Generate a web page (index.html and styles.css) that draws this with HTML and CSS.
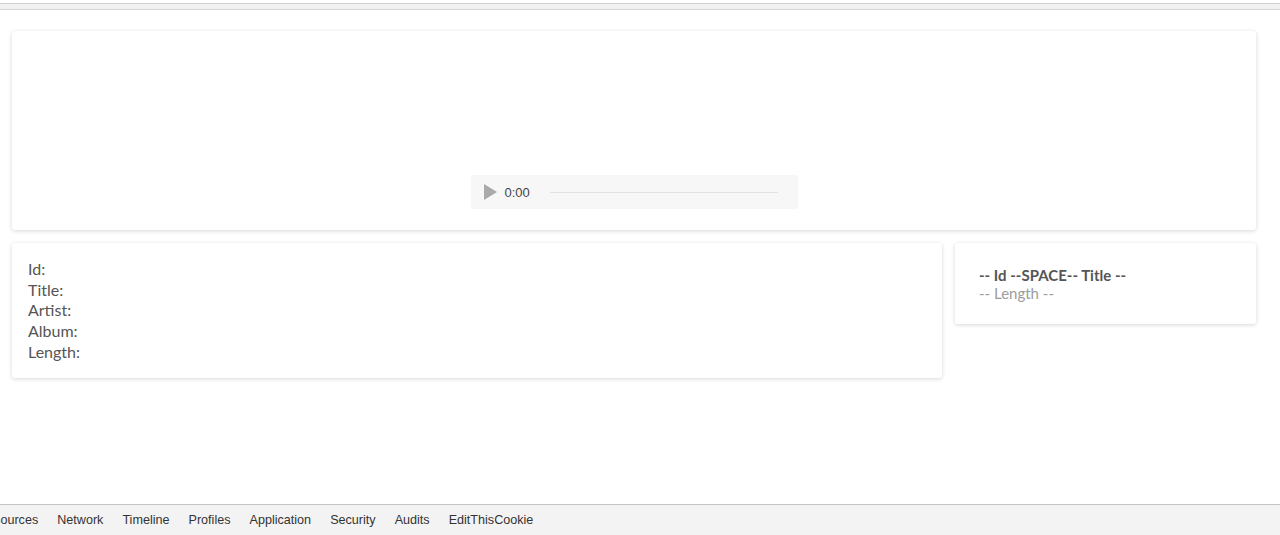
FILE: index.html
```html
<!DOCTYPE html>
<html lang="en">
<head>
    <meta charset="UTF-8">
    <title>Player</title>
    <link rel="stylesheet" href="styles.css">
</head>
<body>
    <div class="top-strip"></div>

    <main class="page">
        <section class="card player-card">
            <div class="audio">
                <span class="play"></span>
                <span class="time">0:00</span>
                <span class="track"></span>
            </div>
        </section>

        <div class="row">
            <section class="card info-card">
                <div>Id:</div>
                <div>Title:</div>
                <div>Artist:</div>
                <div>Album:</div>
                <div>Length:</div>
            </section>
            <section class="card list-card">
                <div class="item-title">-- Id --SPACE-- Title --</div>
                <div class="item-sub">-- Length --</div>
            </section>
        </div>
    </main>

    <nav class="devtools">
        <span class="tab first">Sources</span>
        <span class="tab">Network</span>
        <span class="tab">Timeline</span>
        <span class="tab">Profiles</span>
        <span class="tab">Application</span>
        <span class="tab">Security</span>
        <span class="tab">Audits</span>
        <span class="tab">EditThisCookie</span>
    </nav>
</body>
</html>
```

FILE: styles.css
```css
* {
    margin: 0;
    padding: 0;
    box-sizing: border-box;
}

body {
    width: 1280px;
    height: 535px;
    overflow: hidden;
    background: #fff;
    font-family: 'Lato', 'Open Sans', sans-serif;
    color: #555;
    display: flex;
    flex-direction: column;
}

.top-strip {
    margin-top: 3px;
    height: 7px;
    background: #f1f1f1;
    border-top: 1px solid #d2d2d2;
    border-bottom: 1px solid #d6d6d6;
}

.page {
    flex: 1;
    padding: 21px 24px 0 12px;
}

.card {
    background: #fff;
    border-radius: 3px;
    box-shadow: 0 1px 4px rgba(0, 0, 0, 0.16);
}

.player-card {
    height: 199px;
    display: flex;
    align-items: flex-end;
    justify-content: center;
    padding-bottom: 21px;
}

.audio {
    width: 327px;
    height: 34px;
    background: #f7f7f7;
    display: flex;
    align-items: center;
    padding: 0 20px 0 13px;
    font-family: 'Liberation Sans', Arial, sans-serif;
    font-size: 13px;
    color: #444;
}

.play {
    width: 0;
    height: 0;
    border-top: 8px solid transparent;
    border-bottom: 8px solid transparent;
    border-left: 13px solid #aaa;
    margin-right: 8px;
}

.time {
    margin-right: 20px;
}

.track {
    flex: 1;
    height: 1px;
    background: #e2e2e2;
}

.row {
    display: flex;
    align-items: flex-start;
    gap: 13px;
    margin-top: 13px;
}

.info-card {
    width: 930px;
    padding: 16px 16px 15px;
    font-size: 16px;
    line-height: 20.7px;
}

.list-card {
    flex: 1;
    height: 81px;
    padding: 23px 24px 0;
    font-size: 15px;
    line-height: 18px;
}

.item-title {
    font-weight: bold;
    color: #555;
}

.item-sub {
    color: #9c9c9c;
}

.devtools {
    height: 31px;
    background: #f3f3f3;
    border-top: 1px solid #c4c4c4;
    display: flex;
    align-items: center;
    gap: 19px;
    font-family: 'Liberation Sans', Arial, sans-serif;
    font-size: 12.6px;
    color: #333;
    white-space: nowrap;
}

.tab.first {
    margin-left: -8px;
}
```
